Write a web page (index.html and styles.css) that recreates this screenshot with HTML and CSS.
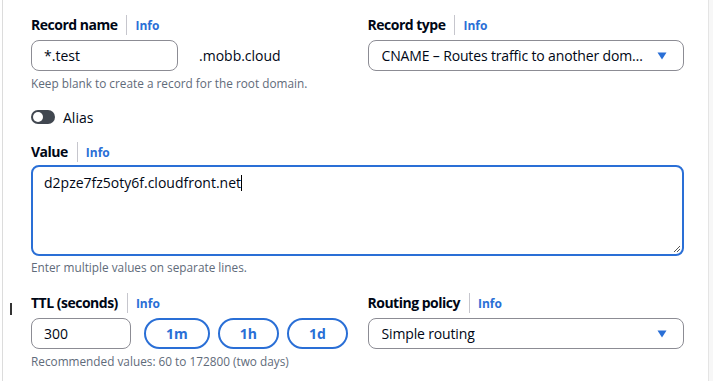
FILE: index.html
```html
<!DOCTYPE html>
<html>
<head>
<meta charset="utf-8">
<link rel="stylesheet" href="styles.css">
</head>
<body>
<div class="page">
  <span class="edge-cursor"></span>
  <div class="form">
    <div class="row two">
      <div class="field">
        <div class="label"><span class="label-text">Record name</span><span class="info">Info</span></div>
        <div class="control-line">
          <div class="input name-input">*.test</div>
          <span class="suffix">.mobb.cloud</span>
        </div>
        <div class="hint">Keep blank to create a record for the root domain.</div>
      </div>
      <div class="field">
        <div class="label"><span class="label-text">Record type</span><span class="info">Info</span></div>
        <div class="select">
          <span class="select-text">CNAME – Routes traffic to another domain name and to some AWS resources</span>
          <svg class="caret-icon" width="10" height="8" viewBox="0 0 10 8"><path d="M0.5 0.5 H9.5 L5 7.5 Z" fill="#2a6fd6"/></svg>
        </div>
      </div>
    </div>

    <div class="toggle-row">
      <span class="toggle"><span class="knob"></span></span>
      <span class="toggle-label">Alias</span>
    </div>

    <div class="field value-field">
      <div class="label"><span class="label-text">Value</span><span class="info">Info</span></div>
      <div class="textarea">
        <span class="value-text">d2pze7fz5oty6f.cloudfront.net</span><span class="text-caret"></span>
        <svg class="grip" width="9" height="9" viewBox="0 0 9 9"><path d="M8 2 L2 8 M8 5 L5 8" stroke="#555" stroke-width="1"/></svg>
      </div>
      <div class="hint">Enter multiple values on separate lines.</div>
    </div>

    <div class="row two ttl-row">
      <div class="field">
        <div class="label"><span class="label-text">TTL (seconds)</span><span class="info">Info</span></div>
        <div class="control-line">
          <div class="input ttl-input">300</div>
          <div class="pills">
            <span class="pill">1m</span>
            <span class="pill">1h</span>
            <span class="pill">1d</span>
          </div>
        </div>
        <div class="hint">Recommended values: 60 to 172800 (two days)</div>
      </div>
      <div class="field">
        <div class="label"><span class="label-text">Routing policy</span><span class="info">Info</span></div>
        <div class="select">
          <span class="select-text">Simple routing</span>
          <svg class="caret-icon" width="10" height="8" viewBox="0 0 10 8"><path d="M0.5 0.5 H9.5 L5 7.5 Z" fill="#2a6fd6"/></svg>
        </div>
      </div>
    </div>
  </div>
</div>
<div class="strip"></div>
</body>
</html>
```

FILE: styles.css
```css
* { box-sizing: border-box; }
html, body { margin: 0; padding: 0; }
body {
  display: flex;
  height: 381px;
  overflow: hidden;
  background: #fff;
  font-family: "Open Sans", "Noto Sans", sans-serif;
  color: #000716;
}
.page {
  position: relative;
  flex: none;
  margin-left: 2px;
  width: 707px;
  height: 381px;
  border-left: 1px solid #dcdcdc;
  border-right: 1px solid #e4e4e4;
  background: #fff;
}
.strip { flex: 1; background: #f7f7f7; }
.edge-cursor {
  position: absolute;
  left: 7px;
  top: 303px;
  width: 2px;
  height: 12px;
  background: #333;
}
.form {
  padding: 14px 0 0 28px;
  width: 681px;
}
.row.two {
  display: grid;
  grid-template-columns: minmax(0, 1fr) minmax(0, 1fr);
  column-gap: 20px;
}
.field { display: flex; flex-direction: column; min-width: 0; }
.label {
  display: flex;
  align-items: center;
  height: 22px;
  margin-bottom: 4px;
}
.label-text {
  font-size: 14px;
  font-weight: 700;
  letter-spacing: -0.5px;
  padding-right: 9px;
  border-right: 1px solid #c6c6cd;
  line-height: 20px;
}
.info {
  font-size: 12px;
  font-weight: 700;
  color: #2a6fd6;
  padding-left: 8px;
}
.control-line { display: flex; align-items: center; }
.input, .select {
  height: 31px;
  border: 1px solid #8c8c94;
  border-radius: 8px;
  font-size: 14px;
  display: flex;
  align-items: center;
  padding: 0 12px;
  background: #fff;
}
.name-input { width: 147px; flex: none; }
.suffix { font-size: 14px; margin-left: 21px; white-space: nowrap; }
.hint {
  font-size: 11.8px;
  color: #5f6b7a;
  line-height: 16px;
  margin-top: 4px;
  white-space: nowrap;
}
.select { justify-content: space-between; padding: 0 16px 0 13px; min-width: 0; }
.select-text {
  white-space: nowrap;
  overflow: hidden;
  text-overflow: ellipsis;
  margin-right: 12px;
  min-width: 0;
  letter-spacing: -0.15px;
}
.caret-icon { flex: none; }
.toggle-row {
  display: flex;
  align-items: center;
  height: 20px;
  margin-top: 16px;
}
.toggle {
  width: 24px;
  height: 14px;
  border-radius: 7px;
  background: #414750;
  position: relative;
  display: inline-block;
}
.knob {
  position: absolute;
  left: 2px;
  top: 2px;
  width: 10px;
  height: 10px;
  border-radius: 50%;
  background: #fff;
}
.toggle-label { font-size: 14px; margin-left: 8px; }
.value-field { margin-top: 14px; }
.value-field .label { margin-bottom: 2px; }
.textarea {
  position: relative;
  height: 91px;
  border: 2px solid #2a6fd6;
  border-radius: 8px;
  padding: 6px 11px;
  font-size: 14px;
  line-height: 20px;
}
.text-caret {
  display: inline-block;
  width: 1px;
  height: 16px;
  background: #000;
  vertical-align: -3px;
}
.grip { position: absolute; right: 1px; bottom: 1px; }
.value-field .hint { margin-top: 3px; }
.ttl-row { margin-top: 17px; }
.ttl-input { width: 100px; flex: none; }
.pills { display: flex; gap: 8px; margin-left: 13px; }
.pill {
  height: 31px;
  border: 2px solid #2a6fd6;
  border-radius: 16px;
  padding: 0 20px;
  display: flex;
  align-items: center;
  font-size: 14px;
  font-weight: 700;
  color: #2a6fd6;
}
```
